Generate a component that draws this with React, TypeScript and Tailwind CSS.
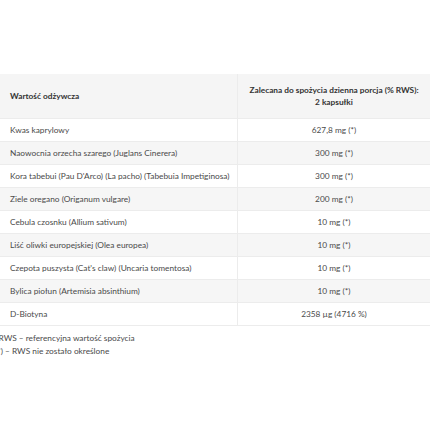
import React from "react";

const rows: [string, string][] = [
  ["Kwas kaprylowy", "627,8 mg (*)"],
  ["Naowocnia orzecha szarego (Juglans Cinerera)", "300 mg (*)"],
  ["Kora tabebui (Pau D'Arco) (La pacho) (Tabebuia Impetiginosa)", "300 mg (*)"],
  ["Ziele oregano (Origanum vulgare)", "200 mg (*)"],
  ["Cebula czosnku (Allium sativum)", "10 mg (*)"],
  ["Liść oliwki europejskiej (Olea europea)", "10 mg (*)"],
  ["Czepota puszysta (Cat's claw) (Uncaria tomentosa)", "10 mg (*)"],
  ["Bylica piołun (Artemisia absinthium)", "10 mg (*)"],
  ["D-Biotyna", "2358 µg (4716 %)"],
];

export default function App() {
  return (
    <div
      className="w-[430px] h-[430px] bg-white overflow-hidden text-[#4a4a4a] text-[8.3px]"
      style={{ fontFamily: "Lato, 'Open Sans', sans-serif" }}
    >
      <div className="h-[74px]" />
      <div className="flex flex-col">
        <div className="flex h-[45px] bg-[#f5f5f5] border-b border-[#ececec]">
          <div className="w-[238px] flex items-center pl-[10px] font-bold text-[#333] border-r border-[#ececec]">
            Wartość odżywcza
          </div>
          <div className="flex-1 flex flex-col items-center justify-center font-bold text-[#333] leading-[12px] text-center">
            <span>Zalecana do spożycia dzienna porcja (% RWS):</span>
            <span>2 kapsułki</span>
          </div>
        </div>
        {rows.map(([a, b], i) => (
          <div
            key={i}
            className={`flex h-[23px] border-b border-[#ececec] ${i % 2 === 1 ? "bg-[#f6f6f6]" : "bg-white"}`}
          >
            <div className="w-[238px] flex items-center pl-[10px] whitespace-nowrap overflow-hidden border-r border-[#ececec]">
              {a}
            </div>
            <div className="flex-1 flex items-center justify-center whitespace-nowrap">{b}</div>
          </div>
        ))}
      </div>
      <div className="mt-[6px] ml-[-5px] leading-[13px]">
        <div>*RWS – referencyjna wartość spożycia</div>
        <div>(*) – RWS nie zostało określone</div>
      </div>
    </div>
  );
}
